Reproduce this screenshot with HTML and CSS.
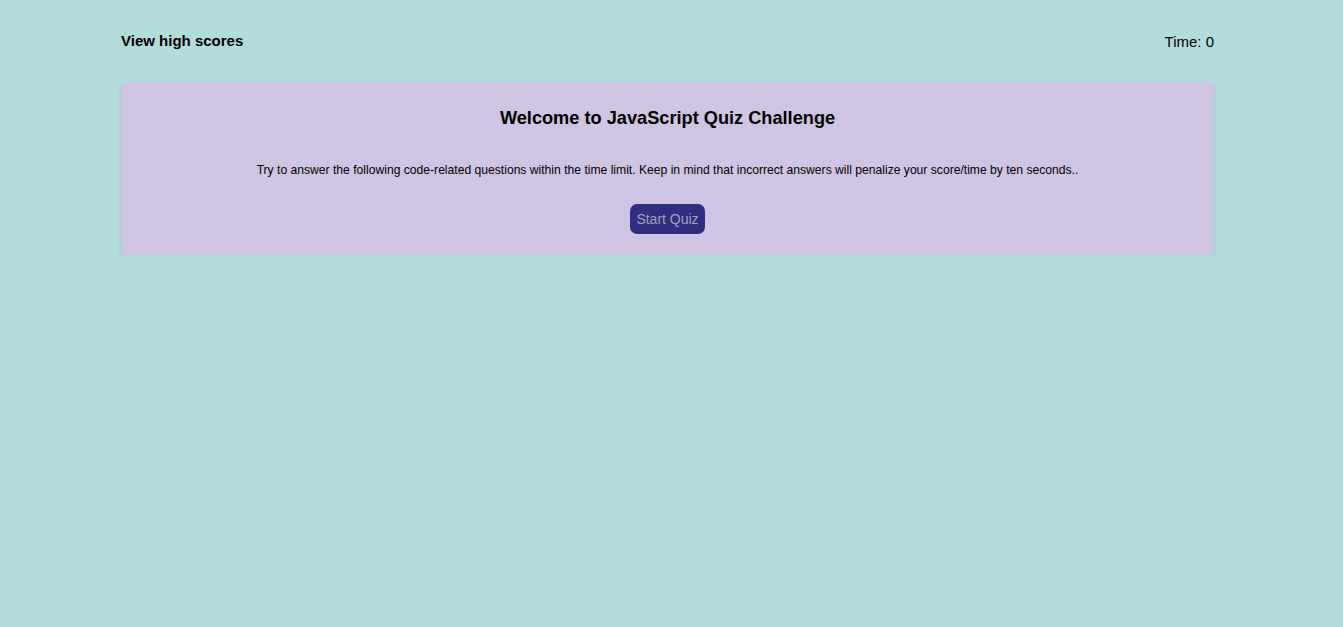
FILE: index.html
```html
<!DOCTYPE html>
<html lang="en">
<head>
<meta charset="utf-8">
<title>JavaScript Quiz Challenge</title>
<link rel="stylesheet" href="styles.css">
</head>
<body>
<div class="page">
  <header class="topbar">
    <a class="scores" href="#">View high scores</a>
    <div class="timer">Time: <span>0</span></div>
  </header>
  <main class="card">
    <h1 class="title">Welcome to JavaScript Quiz Challenge</h1>
    <p class="intro">Try to answer the following code-related questions within the time limit. Keep in mind that incorrect answers will penalize your score/time by ten seconds..</p>
    <button class="start" type="button">Start Quiz</button>
  </main>
</div>
</body>
</html>
```
FILE: styles.css
```css
html, body {
  margin: 0;
  padding: 0;
  background: #b2dcdb;
  font-family: "Liberation Sans", Arial, sans-serif;
  color: #000;
}
.page {
  padding: 0 129px 0 121px;
}
.topbar {
  display: flex;
  justify-content: space-between;
  align-items: center;
  height: 82px;
}
.scores {
  font-size: 15px;
  font-weight: bold;
  color: #000;
  text-decoration: none;
  margin-top: -1px;
}
.timer {
  font-size: 15px;
  margin-top: 1px;
}
.card {
  background: #cfc4e3;
  border-radius: 4px;
  box-shadow: 0 2px 4px rgba(0, 0, 0, 0.12);
  display: flex;
  flex-direction: column;
  align-items: center;
  padding: 26px 20px 21px;
}
.title {
  margin: 0;
  font-size: 18.2px;
  font-weight: bold;
  line-height: 21px;
}
.intro {
  margin: 34px 0 0;
  font-size: 12.13px;
  line-height: 14px;
}
.start {
  margin-top: 27px;
  background: #312e81;
  color: #a6a3b8;
  border: none;
  border-radius: 7px;
  font-family: "Liberation Sans", Arial, sans-serif;
  font-size: 14px;
  height: 30px;
  padding: 0 6px;
}
```
